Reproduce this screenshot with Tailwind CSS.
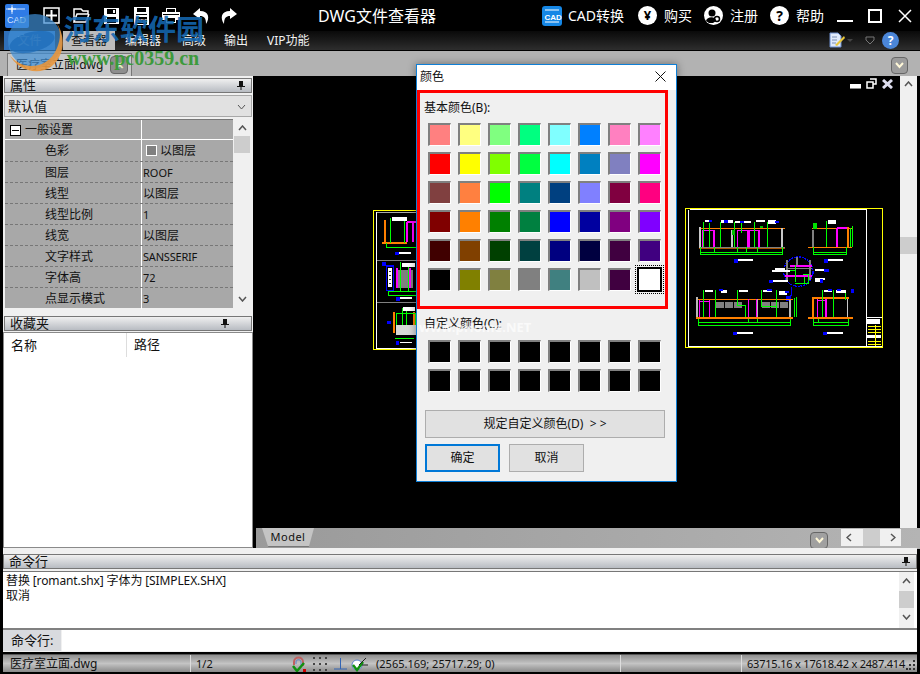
<!DOCTYPE html>
<html>
<head>
    <meta charset="utf-8">
    <title>DWG文件查看器</title>
    <script src="https://cdn.jsdelivr.net/npm/@tailwindcss/browser@4"></script>
</head>
<body class="bg-black">
<div class="relative w-[920px] h-[674px] overflow-hidden bg-black flex flex-col text-[12px] text-[#111] font-['Noto_Sans','Noto_Sans_CJK_SC',sans-serif]">

    <!-- Title bar -->
    <div class="relative h-[31px] shrink-0 flex items-center bg-black text-white">
        <svg class="ml-[5px] shrink-0" width="24" height="24" viewBox="0 0 24 24"><rect width="24" height="24" rx="2" fill="#2f7be6"/><path d="M1 5H20M7 1V10" stroke="#cfe2ff" fill="none"/><path d="M3 5H11M7 3V8" stroke="#fff" fill="none"/><text x="2" y="19" font-size="9" fill="#d5e6ff" font-family="Liberation Sans">CAD</text></svg>
        <!-- quick access -->
        <svg class="ml-[14px] shrink-0" width="17" height="17" viewBox="0 0 17 17"><rect x="1" y="1" width="15" height="15" fill="none" stroke="#fff" stroke-width="1.5"/><path d="M8.5 3V14M3 8.500H14" stroke="#fff" stroke-width="2"/></svg>
        <svg class="ml-[13px] shrink-0" width="17" height="17" viewBox="0 0 17 17"><path d="M1 15V2H8L10 4H15V7H4L1 15H13L16 7" fill="none" stroke="#fff" stroke-width="1.500"/></svg>
        <svg class="ml-[13px] shrink-0" width="17" height="18" viewBox="0 0 17 18"><path d="M1 1H16V17H1Z" fill="#fff"/><path d="M4 2H13V7H4ZM4 10H13V16H4Z" fill="#000"/><path d="M10 3H12V6H10Z" fill="#fff"/></svg>
        <svg class="ml-[13px] shrink-0" width="17" height="20" viewBox="0 0 17 20"><path d="M1 1H16V19H1Z" fill="#fff"/><path d="M4 2H13V6H4ZM3 8H14V9H3ZM3 11H14V18H3Z" fill="#000"/><text x="3.500" y="17" font-size="5.500" fill="#fff" font-family="Liberation Sans">PDF</text></svg>
        <svg class="ml-[12px] shrink-0" width="18" height="17" viewBox="0 0 18 17"><path d="M4 1H14V5H18V13H14V16H4V13H0V5H4Z" fill="#fff"/><path d="M5 2H13V5H5ZM1 7H17V8H1ZM5 11H13V15H5Z" fill="#000"/></svg>
        <svg class="ml-[12px] shrink-0" width="18" height="18" viewBox="0 0 18 18"><path d="M8 1L1 7L8 12V9C12 9 14 11 14 17C18 11 17 4 8 4Z" fill="#fff"/></svg>
        <svg class="ml-[10px] shrink-0" width="18" height="18" viewBox="0 0 18 18"><path d="M10 1L17 7L10 12V9C6 9 4 11 4 17C0 11 1 4 10 4Z" fill="#fff"/></svg>
        <span class="ml-[79px] w-[120px] text-center text-[16px] whitespace-nowrap">DWG文件查看器</span>
        <!-- right side -->
        <svg class="ml-[105px] shrink-0" width="20" height="20" viewBox="0 0 20 20"><rect width="20" height="20" rx="3" fill="#1587e6"/><path d="M3 4H17M3 16H17" stroke="#fff"/><text x="2.500" y="13.500" font-size="8" font-weight="700" fill="#fff" font-family="Liberation Sans">CAD</text></svg>
        <span class="ml-[6px] w-[58px] text-[14px] whitespace-nowrap">CAD转换</span>
        <div class="ml-[12px] w-[19px] h-[19px] rounded-full bg-white text-black font-bold text-[13px] flex items-center justify-center">¥</div>
        <span class="ml-[7px] w-[28px] text-[14px]">购买</span>
        <svg class="ml-[12px] shrink-0" width="19" height="19" viewBox="0 0 19 19"><circle cx="9.500" cy="9.500" r="9.500" fill="#fff"/><circle cx="8" cy="7" r="3.500" fill="#000"/><path d="M2 15C3 10 12 10 12 15L9 17H5Z" fill="#000"/><circle cx="13" cy="13" r="2.500" fill="none" stroke="#000" stroke-width="1.500"/></svg>
        <span class="ml-[7px] w-[28px] text-[14px]">注册</span>
        <div class="ml-[12px] w-[19px] h-[19px] rounded-full bg-white text-black font-bold text-[14px] flex items-center justify-center">?</div>
        <span class="ml-[7px] w-[28px] text-[14px]">帮助</span>
        <svg class="ml-[13px] shrink-0" width="16" height="16" viewBox="0 0 16 16"><path d="M0 13H16" stroke="#fff" stroke-width="2"/></svg>
        <svg class="ml-[15px] shrink-0" width="14" height="14" viewBox="0 0 14 14"><rect x="1" y="1" width="12" height="12" fill="none" stroke="#fff" stroke-width="2"/></svg>
        <svg class="ml-[16px] shrink-0" width="14" height="14" viewBox="0 0 14 14"><path d="M1 1L13 13M13 1L1 13" stroke="#fff" stroke-width="1.500"/></svg>
    </div>

    <!-- Ribbon tabs -->
    <div class="h-[20px] shrink-0 flex items-end border-b border-black bg-gradient-to-b from-[#0a0a0a] to-[#2e2e2e] text-[#f2f2f2]">
        <div class="ml-[4px] w-[51px] h-[19px] bg-[#2f6fb8] text-center leading-[19px]">文件</div>
        <div class="ml-[8px] w-[52px] h-[19px] bg-[#bdbdbd] text-[#111] text-center leading-[19px]">查看器</div>
        <span class="ml-[10px] w-[46px] leading-[19px]">编辑器</span>
        <span class="ml-[11px] w-[31px] leading-[19px]">高级</span>
        <span class="ml-[11px] w-[32px] leading-[19px]">输出</span>
        <span class="ml-[11px] leading-[19px]">VIP功能</span>
        <svg class="ml-auto mb-[2px]" width="17" height="16" viewBox="0 0 17 16"><path d="M1 1H9L12 4V15H1Z" fill="#dfe9fb" stroke="#6d8fcf"/><path d="M3 5H8M3 8H8M3 11H7" stroke="#7a8fb5"/><path d="M6 13L15 4L16 6L8 14Z" fill="#e8c63c"/></svg>
        <svg class="ml-[1px] mb-[7px]" width="6" height="4" viewBox="0 0 6 4"><path d="M0 0H6L3 3Z" fill="#444"/></svg>
        <svg class="ml-[12px] mb-[5px]" width="10" height="9" viewBox="0 0 10 9"><path d="M1 1H9V4L5 8L1 4Z" fill="none" stroke="#777"/></svg>
        <div class="ml-[7px] mr-[21px] mb-[1px] w-[17px] h-[17px] rounded-full bg-[#4b86d8] text-white font-bold text-[12px] leading-[17px] text-center">?</div>
    </div>

    <!-- Document tab strip -->
    <div class="h-[25px] shrink-0 flex items-end bg-[#b2b2b2]">
        <div class="ml-[7px] w-[125px] h-[23px] bg-[#c8c8c8] border-t border-l border-r border-[#777] flex items-center pl-[8px] text-[12px] whitespace-nowrap">
            医疗室立面.dwg
            <span class="ml-auto mr-[3px] w-[18px] h-[18px] rounded-sm bg-[#8e8e8e] border border-[#666] text-[#e6f0c0] text-[11px] font-bold leading-[16px] text-center">✕</span>
        </div>
        <div class="ml-auto mr-[12px] mb-[2px] w-[17px] h-[17px] rounded-sm bg-[#9c9c9c] border border-[#666] flex items-center justify-center">
            <svg width="9" height="7" viewBox="0 0 9 7"><path d="M1 1L4.500 5L8 1" fill="none" stroke="#fff8d8" stroke-width="2"/></svg>
        </div>
    </div>

    <!-- Main area -->
    <div class="h-[473px] shrink-0 flex bg-[#f0f0f0]">
        <!-- Left panels -->
        <div class="w-[256px] shrink-0 flex flex-col bg-black">
            <div class="ml-[3px] w-[250px] h-full bg-[#f0f0f0] flex flex-col">
                <div class="mt-[2px] h-[15px] mx-[1px] bg-gradient-to-b from-[#f0f0f0] to-[#b8bcc2] border border-[#777] flex items-center justify-between pl-[5px] pr-[6px] text-[13px]">
                    属性
                    <svg width="8" height="9" viewBox="0 0 8 9"><path d="M2 0H6V5H8V6H4.500V9H3.500V6H0V5H2Z" fill="#111"/></svg>
                </div>
                <div class="mt-[2px] h-[22px] mx-[1px] bg-[#e1e1e1] border border-[#a8a8a8] flex items-center justify-between pl-[3px] pr-[5px] pt-px text-[13px]">
                    默认值
                    <svg width="9" height="6" viewBox="0 0 9 6"><path d="M1 1L4.500 5L8 1" fill="none" stroke="#555"/></svg>
                </div>
                <!-- Property grid -->
                <div class="mt-[2px] flex h-[189px] shrink-0">
                    <div class="ml-[2px] w-[228px] bg-[#a8a8a8] border-t border-[#777]">
                        <div class="h-[20px] flex border-b border-white">
                            <div class="w-[137px] border-r border-white flex items-center pl-[5px] pt-px">
                                <span class="w-[11px] h-[11px] border border-black bg-white flex items-center justify-center"><span class="w-[7px] h-px bg-black"></span></span>
                                <span class="ml-[4px]">一般设置</span>
                            </div>
                        </div>
                        <div class="h-[22px] flex border-b border-dashed border-[#777]"><div class="w-[137px] border-r border-white pl-[40px] leading-[22px]">色彩</div><div class="flex items-center pl-[4px]"><span class="w-[11px] h-[11px] bg-[#808080] border border-white"></span><span class="ml-[3px]">以图层</span></div></div>
                        <div class="h-[21px] flex border-b border-dashed border-[#777]"><div class="w-[137px] border-r border-white pl-[40px] leading-[22px]">图层</div><div class="pl-[1px] text-[11px] leading-[21px]">ROOF</div></div>
                        <div class="h-[21px] flex border-b border-dashed border-[#777]"><div class="w-[137px] border-r border-white pl-[40px] leading-[22px]">线型</div><div class="pl-[1px] leading-[22px]">以图层</div></div>
                        <div class="h-[21px] flex border-b border-dashed border-[#777]"><div class="w-[137px] border-r border-white pl-[40px] leading-[22px]">线型比例</div><div class="pl-[1px] text-[11px] leading-[21px]">1</div></div>
                        <div class="h-[21px] flex border-b border-dashed border-[#777]"><div class="w-[137px] border-r border-white pl-[40px] leading-[22px]">线宽</div><div class="pl-[1px] leading-[22px]">以图层</div></div>
                        <div class="h-[21px] flex border-b border-dashed border-[#777]"><div class="w-[137px] border-r border-white pl-[40px] leading-[22px]">文字样式</div><div class="pl-[1px] text-[11px] tracking-[-0.2px] leading-[21px]">SANSSERIF</div></div>
                        <div class="h-[21px] flex border-b border-dashed border-[#777]"><div class="w-[137px] border-r border-white pl-[40px] leading-[22px]">字体高</div><div class="pl-[1px] text-[11px] leading-[21px]">72</div></div>
                        <div class="h-[21px] flex"><div class="w-[137px] border-r border-white pl-[40px] leading-[22px]">点显示模式</div><div class="pl-[1px] text-[11px] leading-[21px]">3</div></div>
                    </div>
                    <div class="ml-px w-[16px] bg-[#f0f0f0] flex flex-col items-center">
                        <svg class="mt-[6px]" width="9" height="6" viewBox="0 0 9 6"><path d="M1 5L4.500 1L8 5" fill="none" stroke="#555" stroke-width="1.500"/></svg>
                        <div class="mt-[5px] w-[16px] h-[17px] bg-[#cdcdcd]"></div>
                        <svg class="mt-auto mb-[6px]" width="9" height="6" viewBox="0 0 9 6"><path d="M1 1L4.500 5L8 1" fill="none" stroke="#555" stroke-width="1.500"/></svg>
                    </div>
                </div>
                <!-- Favorites -->
                <div class="mt-[8px] h-[15px] mx-[1px] bg-gradient-to-b from-[#f0f0f0] to-[#b8bcc2] border border-[#777] flex items-center justify-between pl-[5px] pr-[22px] text-[13px]">
                    收藏夹
                    <svg width="8" height="9" viewBox="0 0 8 9"><path d="M2 0H6V5H8V6H4.500V9H3.500V6H0V5H2Z" fill="#111"/></svg>
                </div>
                <div class="mt-[1px] flex-1 bg-white border-t border-l border-b border-[#8a8a8a] border-r mb-px">
                    <div class="h-[24px] flex items-center text-[13px]">
                        <span class="ml-[7px] w-[116px] border-r border-[#ddd] leading-[24px]">名称</span>
                        <span class="ml-[7px]">路径</span>
                    </div>
                </div>
            </div>
        </div>

        <!-- Drawing area -->
        <div class="flex-1 flex flex-col bg-black">
            <div class="flex h-[452px]">
                <div class="relative w-[644px] bg-black">
                    <!-- left sheet -->
                    <svg class="absolute left-[114px] top-[124px]" width="50" height="160" viewBox="0 0 150 480" shape-rendering="crispEdges">
                        <path d="M150 31H11V447H150" fill="none" stroke="#ffff00" stroke-width="3"/>
                        <path d="M19 37V444H150" fill="none" stroke="#fff" stroke-width="3"/>
                        <path d="M19 37H150" stroke="#fff" stroke-width="2"/>
                        <path d="M22 181H150M22 306H150" stroke="#808080" stroke-width="3"/>
                        <path d="M46 60V128M36 128H110" stroke="#ff8000" stroke-width="6" fill="none"/>
                        <path d="M60 55V128M104 55V128M48 142H150M48 128V142" stroke="#00ff00" stroke-width="3" fill="none"/>
                        <path d="M110 66V125M130 66V125M110 66H150" stroke="#ff00ff" stroke-width="6" fill="none"/>
                        <path d="M66 52H110V62H66ZM84 157H122V162H84Z" fill="#fff"/>
                        <path d="M74 155H86V166H74Z" fill="#0000ff"/>
                        <path d="M36 187H48V198H36ZM78 292H90V302H78Z" fill="#0000ff"/>
                        <path d="M49 198H70V272H49Z" fill="none" stroke="#0000ff" stroke-width="4"/>
                        <path d="M54 205H66V262H54Z" fill="#fff"/>
                        <path d="M56 214H64M56 226H64M56 238H64M56 250H64" stroke="#333" stroke-width="3"/>
                        <path d="M80 210H130V265H80Z" fill="#808080"/>
                        <path d="M80 205V265M120 205V265" stroke="#ff00ff" stroke-width="5"/>
                        <path d="M55 275H150V285H55ZM90 185V275M115 190V275" fill="none" stroke="#00ff00" stroke-width="3"/>
                        <path d="M95 190H135V200H95ZM90 292H126V297H90Z" fill="#fff"/>
                        <path d="M72 336V400M132 336V400" stroke="#ff8000" stroke-width="5"/>
                        <path d="M80 340H136V400H80ZM98 325V405M110 325V405M75 415H132" fill="none" stroke="#00ff00" stroke-width="4"/>
                        <path d="M78 375H145V405H78Z" fill="#d8d8d8"/>
                        <path d="M100 322H135V332H100ZM90 425H125V430H90Z" fill="#fff"/>
                        <path d="M52 362H62V372H52ZM78 424H88V434H78Z" fill="#0000ff"/>
                    </svg>
                    <!-- right sheet -->
                    <svg class="absolute left-[424px] top-[124px]" width="240" height="160" viewBox="0 0 720 480" shape-rendering="crispEdges">
                        <rect x="16" y="26" width="591" height="416" fill="none" stroke="#ffff00" stroke-width="4"/>
                        <path d="M25 30V439H606M30 29H558V439" fill="none" stroke="#fff" stroke-width="3"/>
                        <path d="M558 352H606" stroke="#fff" stroke-width="4"/>
                        <path d="M562 356H600V372H562ZM560 406H602V414H560Z" fill="#fff"/>
                        <path d="M565 380H604M565 388H604M565 396H604M585 376V438M565 424H604M565 432H604" stroke="#ffff00" stroke-width="3"/>
                        <path d="M56 85H315" stroke="#ff8000" stroke-width="3"/>
                        <path d="M56 142H315" stroke="#808080" stroke-width="5"/>
                        <path d="M56 145H315" stroke="#ff8000" stroke-width="2"/>
                        <path d="M60 80V145M156 90V140M306 85V140" stroke="#c8c8c8" stroke-width="6"/>
                        <path d="M68 90V140M102 90V140M172 90V140M203 90V140M208 90V140M236 90V140" stroke="#ff00ff" stroke-width="5"/>
                        <path d="M68 90H102M172 90H203M208 90H236" stroke="#ff00ff" stroke-width="3"/>
                        <path d="M70 66V140M88 70V140M122 66V140M162 66V140M184 70V100M222 66V140M262 66V140M60 142V164H306V142M60 156H306M102 142V156M172 142V156M198 142V156M232 142V156" fill="none" stroke="#00ff00" stroke-width="3"/>
                        <path d="M155 90H165V105H155ZM240 78H250V84H240Z" fill="#00c000"/>
                        <path d="M75 60H95V66H75ZM122 60H158V70H122ZM165 64H212V70H165ZM228 60H254V66H228ZM264 60H288V72H264ZM175 176H218V183H175ZM445 176H488V183H445Z" fill="#fff"/>
                        <path d="M86 60H96V66H86ZM132 60H145V68H132ZM180 62H192V68H180ZM284 64H298V70H284ZM162 176H175V188H162ZM432 176H444V188H432Z" fill="#0000ff"/>
                        <path d="M396 85H516" stroke="#ff8000" stroke-width="3"/>
                        <path d="M384 141H516" stroke="#ff8000" stroke-width="3"/>
                        <path d="M399 90V140" stroke="#808080" stroke-width="6"/>
                        <path d="M470 84V140M470 84H504" stroke="#ff00ff" stroke-width="5" fill="none"/>
                        <path d="M504 80V140" stroke="#ff8000" stroke-width="5"/>
                        <path d="M438 64V140M400 142V164H500V142M400 156H500M510 84V140M518 78V140" fill="none" stroke="#00ff00" stroke-width="3"/>
                        <path d="M400 70H412V86H400Z" fill="#00e000"/>
                        <path d="M445 60H468V72H445Z" fill="#fff"/>
                        <circle cx="355" cy="215" r="44" fill="none" stroke="#0000ff" stroke-width="4" stroke-dasharray="6 2"/>
                        <path d="M320 180V240M390 180V240M350 170V200" stroke="#808080" stroke-width="6"/>
                        <path d="M330 198H395M315 228H395" stroke="#ff00ff" stroke-width="4"/>
                        <path d="M320 205H395" stroke="#808080" stroke-width="4"/>
                        <path d="M320 210H345V245M368 222H385V250H345M374 230V250M345 195V230" fill="none" stroke="#00ff00" stroke-width="3"/>
                        <path d="M275 210H330V216H275ZM285 204H315V210H285ZM280 241H325V246H280ZM405 207H435V213H405ZM405 234H435V240H405ZM405 240H420V246H405Z" fill="#fff"/>
                        <path d="M266 240H280V248H266ZM433 206H446V216H433ZM420 236H430V248H420ZM318 288H332V302H318Z" fill="#0000ff"/>
                        <path d="M335 260V285L325 295" fill="none" stroke="#0000ff" stroke-width="4"/>
                        <path d="M50 298H340" stroke="#ff8000" stroke-width="3"/>
                        <path d="M48 354H338" stroke="#ff8000" stroke-width="4"/>
                        <path d="M50 292V352M232 298V352M330 300V352" stroke="#b8b8b8" stroke-width="5"/>
                        <path d="M58 300V352M88 300V352M205 298V352M230 298V352" stroke="#ff00ff" stroke-width="4"/>
                        <path d="M60 305H88" stroke="#ff00ff" stroke-width="3"/>
                        <path d="M108 306H132V324H108ZM135 306H159V324H135ZM162 306H186V324H162ZM246 306H270V324H246ZM273 306H297V324H273ZM300 306H324V324H300Z" fill="#808080"/>
                        <path d="M70 270V352M106 270V352M172 270V315H196V352M244 270V318H290M290 270V352M342 295V352M350 292V352M54 356V376H332V356M54 368H332M205 356V370M232 356V370" fill="none" stroke="#00ff00" stroke-width="3"/>
                        <path d="M76 270H98V276H76ZM122 270H140V278H122ZM176 270H204V276H176ZM248 270H276V276H248ZM296 272H322V284H296ZM172 396H218V403H172ZM442 396H488V403H442Z" fill="#fff"/>
                        <path d="M118 268H130V274H118ZM262 268H276V274H262ZM316 274H326V280H316ZM160 395H172V406H160ZM430 395H442V406H430Z" fill="#0000ff"/>
                        <path d="M396 294H506M384 354H518" stroke="#ff8000" stroke-width="4"/>
                        <path d="M399 292V352" stroke="#ff8000" stroke-width="6"/>
                        <path d="M502 298V352" stroke="#c8c8c8" stroke-width="5"/>
                        <path d="M412 298V352M438 298V352M412 302H438" stroke="#ff00ff" stroke-width="4" fill="none"/>
                        <path d="M426 270V352M460 270V352M496 270V300M400 356V376H504V356M400 368H504M414 356V368" fill="none" stroke="#00ff00" stroke-width="3"/>
                        <path d="M432 270H456V276H432ZM468 270H498V278H468Z" fill="#fff"/>
                        <path d="M444 268H456V274H444ZM472 268H484V274H472ZM512 268H522V278H512Z" fill="#0000ff"/>
                    </svg>
                    <!-- window controls -->
                    <div class="absolute right-[7px] top-[2px] flex items-center gap-[5px]">
                        <span class="mt-[5px] w-[11px] h-[5px] bg-white border-b border-[#888]"></span>
                        <svg width="11" height="11" viewBox="0 0 11 11"><path d="M4 1H10V6H7M1 4H7V10H1Z" fill="none" stroke="#fff" stroke-width="1.500"/></svg>
                        <svg width="11" height="10" viewBox="0 0 11 10"><path d="M1 1L10 9M10 1L1 9" stroke="#dde" stroke-width="3"/></svg>
                    </div>
                </div>
                <!-- vertical scrollbar -->
                <div class="w-[17px] bg-[#f0f0f0] flex flex-col items-center">
                    <svg class="mt-[5px]" width="9" height="6" viewBox="0 0 9 6"><path d="M1 5L4.500 1L8 5" fill="none" stroke="#555" stroke-width="1.500"/></svg>
                    <div class="mt-[150px] w-[17px] h-[17px] bg-[#cdcdcd]"></div>
                </div>
                <div class="w-[3px] bg-black"></div>
            </div>
            <!-- Model tab strip -->
            <div class="h-[21px] flex bg-gradient-to-r from-[#9a9a9a] to-[#b4b4b4]">
                <div class="ml-[6px] w-[52px] h-[19px] bg-[#c4c4c4] border-b border-[#777] text-[11px] tracking-[0.5px] text-center leading-[18px] [clip-path:polygon(0_0,100%_0,90%_100%,12%_100%)]">Model</div>
                <div class="ml-[496px] mt-[4px] w-[18px] h-[17px] rounded-sm bg-[#a0a0a0] border border-[#666] flex items-center justify-center">
                    <svg width="9" height="7" viewBox="0 0 9 7"><path d="M1 1L4.500 5L8 1" fill="none" stroke="#fff8d8" stroke-width="2"/></svg>
                </div>
                <div class="ml-[13px] w-[60px] h-[17px] mt-px bg-[#f0f0f0] flex items-center justify-between px-[5px] relative">
                    <svg width="6" height="9" viewBox="0 0 6 9"><path d="M5 1L1 4.500L5 8" fill="none" stroke="#555" stroke-width="1.500"/></svg>
                    <span class="w-[17px] h-[17px] bg-[#cdcdcd]"></span>
                    <svg width="6" height="9" viewBox="0 0 6 9"><path d="M1 1L5 4.500L1 8" fill="none" stroke="#555" stroke-width="1.500"/></svg>
                </div>
            </div>
        </div>
    </div>

    <!-- Command panel -->
    <div class="mx-[3px] h-[104px] shrink-0 flex flex-col bg-[#f0f0f0] -mt-px">
        <div class="mt-[6px] h-[15px] bg-gradient-to-b from-[#f0f0f0] to-[#b8bcc2] border border-[#777] flex items-center justify-between pl-[5px] pr-[6px] text-[13px]">
            命令行
            <svg width="8" height="9" viewBox="0 0 8 9"><path d="M2 0H6V5H8V6H4.500V9H3.500V6H0V5H2Z" fill="#111"/></svg>
        </div>
        <div class="mt-[2px] h-[59px] bg-white border-t border-[#777] border-b-2 border-b-[#808080] flex">
            <div class="flex-1 pl-[3px] pt-[1px] text-[12px] tracking-[-0.12px] leading-[15px]">
                <div>替换 [romant.shx] 字体为 [SIMPLEX.SHX]</div>
                <div>取消</div>
            </div>
            <div class="mr-[3px] w-[15px] bg-[#f0f0f0] flex flex-col items-center">
                <svg class="mt-[6px]" width="9" height="6" viewBox="0 0 9 6"><path d="M1 5L4.500 1L8 5" fill="none" stroke="#555" stroke-width="1.500"/></svg>
                <div class="mt-[7px] w-[15px] h-[17px] bg-[#cdcdcd]"></div>
                <svg class="mt-[6px]" width="9" height="6" viewBox="0 0 9 6"><path d="M1 1L4.500 5L8 1" fill="none" stroke="#555" stroke-width="1.500"/></svg>
            </div>
        </div>
        <div class="h-[21px] flex">
            <div class="w-[58px] bg-[#d8dade] text-[13px] leading-[21px] pl-[8px]">命令行:</div>
            <div class="ml-px flex-1 bg-white"></div>
        </div>
    </div>

    <!-- Status bar -->
    <div class="mt-[2px] mx-[3px] h-[18px] shrink-0 flex items-center border-t border-[#555] bg-gradient-to-b from-[#8f8f8f] via-[#c4c4c4] to-[#8a8a8a] text-[11px]">
        <span class="ml-[7px] w-[181px] h-full leading-[17px] border-r border-[#ddd] text-[12px]">医疗室立面.dwg</span>
        <span class="ml-[5px] w-[95px] h-full leading-[17px]">1/2</span>
        <svg width="16" height="16" viewBox="0 0 16 16"><path d="M3 9V6C3 0 12 0 12 6V10" fill="none" stroke="#c06060" stroke-width="2"/><path d="M5 8V6C5 3 10 3 10 6V9" fill="none" stroke="#5a80c8"/><path d="M2 10L6 15L13 7" fill="none" stroke="#109010" stroke-width="2.500"/><rect x="12" y="13" width="3" height="3" fill="#d00000"/></svg>
        <span class="ml-[5px] w-[16px] h-[15px] grid grid-cols-3 gap-[3px] items-center justify-items-center"><i class="w-[2px] h-[2px] bg-[#444]"></i><i class="w-[2px] h-[2px] bg-[#444]"></i><i class="w-[2px] h-[2px] bg-[#444]"></i><i class="w-[2px] h-[2px] bg-[#444]"></i><i class="w-[2px] h-[2px] bg-[#444]"></i><i class="w-[2px] h-[2px] bg-[#444]"></i><i class="w-[2px] h-[2px] bg-[#444]"></i><i class="w-[2px] h-[2px] bg-[#444]"></i><i class="w-[2px] h-[2px] bg-[#444]"></i></span>
        <svg class="ml-[5px]" width="15" height="15" viewBox="0 0 15 15"><path d="M7.500 2V13M1 13H14" stroke="#3264b4"/></svg>
        <svg class="ml-[3px]" width="17" height="16" viewBox="0 0 17 16"><circle cx="6" cy="9" r="5" fill="#fff" stroke="#5a80c8"/><path d="M2 9L6 14L12 6" fill="none" stroke="#109010" stroke-width="2.500"/><path d="M8 9L15 2M11 9H17" stroke="#222"/></svg>
        <span class="ml-[8px] w-[245px] h-full leading-[17px] border-r border-[#ddd]">(2565.169; 25717.29; 0)</span>
        <span class="w-[121px] h-full border-r border-[#ddd]"></span>
        <span class="ml-[5px] leading-[17px] tracking-[-0.2px] whitespace-nowrap">63715.16 x 17618.42 x 2487.414</span>
        <svg class="ml-auto mr-[1px]" width="10" height="12" viewBox="0 0 10 12"><path d="M7 2H9V4H7ZM7 6H9V8H7ZM3 6H5V8H3ZM7 10H9V12H7ZM3 10H5V12H3ZM0 10H2V12H0Z" fill="#333"/></svg>
    </div>

    <!-- Colour dialog -->
    <div class="absolute left-[416px] top-[64px] w-[261px] h-[418px] bg-[#f0f0f0] border border-[#0f7fd6] flex flex-col shadow-[0_0_8px_rgba(0,0,0,0.4)]">
        <div class="h-[25px] shrink-0 bg-white flex items-center justify-between pl-[3px] pr-[10px] pb-[2px] text-[12px]">
            颜色
            <svg width="11" height="11" viewBox="0 0 11 11"><path d="M0.500 0.500L10.500 10.500M10.500 0.500L0.500 10.500" stroke="#111"/></svg>
        </div>
        <div class="w-[251px] h-[219px] border-[3px] border-[#ff0000] pl-[8px]">
            <div class="h-[30px] -ml-[4px] pt-[7px] leading-[16px]">基本颜色(B):</div>
            <div id="basicColors" class="grid grid-cols-[repeat(8,30px)] auto-rows-[29px]"></div>
        </div>
        <div class="ml-[7px] mt-[6px] h-[17px] leading-[17px]">自定义颜色(C):</div>
        <div id="customColors" class="ml-[11px] mt-[8px] grid grid-cols-[repeat(8,30px)] auto-rows-[29px]"></div>
        <button class="ml-[8px] mt-[12px] w-[240px] h-[28px] bg-[#e1e1e1] border border-[#adadad] text-[12px] whitespace-pre">规定自定义颜色(D)  &gt; &gt;</button>
        <div class="flex ml-[8px] mt-[6px]">
            <button class="w-[75px] h-[28px] bg-[#e1e1e1] border-2 border-[#0078d7] text-[12px]">确定</button>
            <button class="ml-[9px] w-[75px] h-[28px] bg-[#e1e1e1] border border-[#adadad] text-[12px]">取消</button>
        </div>
        <span class="absolute left-[2px] top-[253px] text-white/70 text-[13px] font-bold whitespace-nowrap">www.pHome.NET</span>
    </div>

    <!-- Watermark over the top left corner -->
    <svg class="absolute left-[5px] top-[10px] pointer-events-none" width="60" height="64" viewBox="0 0 60 64">
        <circle cx="30" cy="31" r="27" fill="#3e8fd6" fill-opacity="0.7"/>
        <path d="M4 44C14 60 42 62 52 38C56 28 56 20 51 12C60 24 61 44 47 56C33 67 12 60 4 44Z" fill="#e8963c" fill-opacity="0.9"/>
        <ellipse cx="27" cy="32" rx="23" ry="10" transform="rotate(-14 27 32)" fill="#1e6cb8" fill-opacity="0.75"/>
    </svg>
    <span class="absolute left-[64px] top-[11px] text-[28px] leading-[36px] font-bold text-[#1467b0]/90 whitespace-nowrap pointer-events-none">河东软件园</span>
    <span class="absolute left-[67px] top-[47px] text-[20px] leading-[22px] font-bold text-[#3d9a3d] whitespace-nowrap font-['Liberation_Serif',serif] pointer-events-none">www.pc0359.cn</span>
</div>

<script>
    const basicColors = [
        '#ff8080', '#ffff80', '#80ff80', '#00ff80', '#80ffff', '#0080ff', '#ff80c0', '#ff80ff',
        '#ff0000', '#ffff00', '#80ff00', '#00ff40', '#00ffff', '#0080c0', '#8080c0', '#ff00ff',
        '#804040', '#ff8040', '#00ff00', '#008080', '#004080', '#8080ff', '#800040', '#ff0080',
        '#800000', '#ff8000', '#008000', '#008040', '#0000ff', '#0000a0', '#800080', '#8000ff',
        '#400000', '#804000', '#004000', '#004040', '#000080', '#000040', '#400040', '#400080',
        '#000000', '#808000', '#808040', '#808080', '#408080', '#c0c0c0', '#400040', '#ffffff'
    ];

    function addSwatch(parent, color, selected) {
        const cell = document.createElement('div');
        const box = document.createElement('div');
        if (selected) {
            // the picked colour has a dotted focus frame round it
            cell.className = 'w-[30px] h-[29px] -ml-[3px] -mt-[3px]';
            box.className = 'w-[29px] h-[29px] border border-dotted border-black p-px';
            box.innerHTML = '<div class="w-full h-full border-2 border-black bg-white"></div>';
        } else {
            cell.className = 'w-[30px] h-[29px]';
            box.className = 'w-[23px] h-[23px] border-t-2 border-l-2 border-r border-b border-t-[#808080] border-l-[#808080] border-r-white border-b-white';
            box.style.backgroundColor = color;
        }
        cell.appendChild(box);
        parent.appendChild(cell);
    }

    const basicGrid = document.getElementById('basicColors');
    basicColors.forEach((color, i) => addSwatch(basicGrid, color, i === basicColors.length - 1));

    const customGrid = document.getElementById('customColors');
    for (let i = 0; i < 16; i++) addSwatch(customGrid, '#000000', false);
</script>
</body>
</html>
